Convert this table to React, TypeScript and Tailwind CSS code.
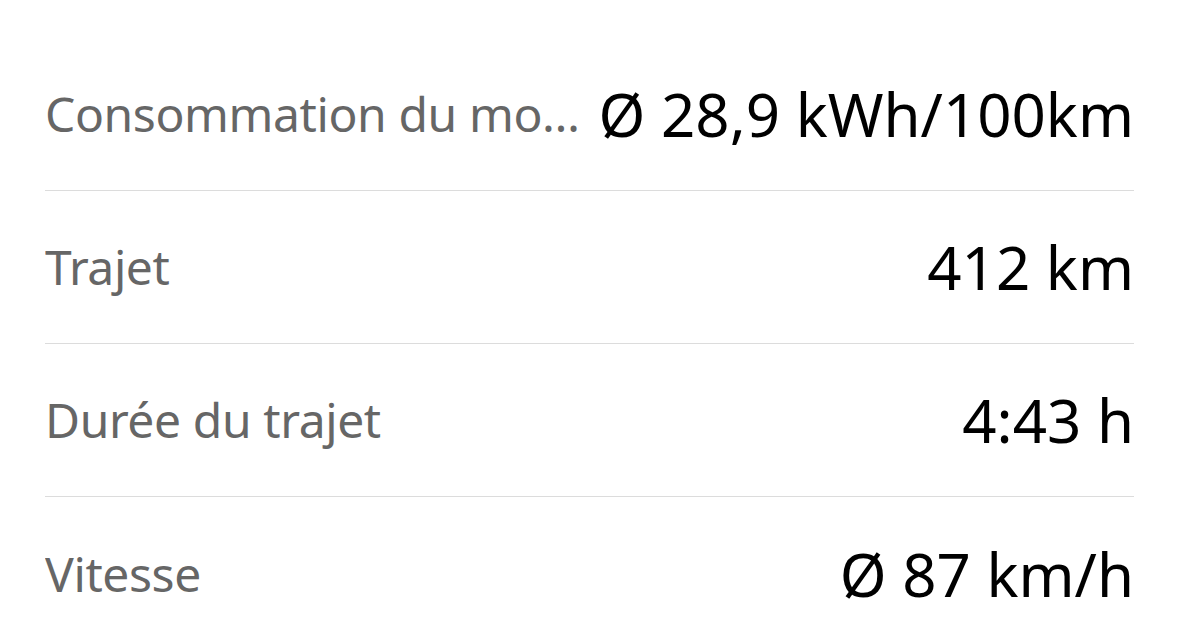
import React from 'react';

const rows = [
  { label: 'Consommation du moteur électrique', value: 'Ø 28,9 kWh/100km' },
  { label: 'Trajet', value: '412 km' },
  { label: 'Durée du trajet', value: '4:43 h' },
  { label: 'Vitesse', value: 'Ø 87 km/h' },
];

const App: React.FC = () => {
  return (
    <div className="min-h-screen bg-white pt-[38px] px-[45px] font-['Noto_Sans',sans-serif]">
      {rows.map((row, i) => (
        <div
          key={row.label}
          className={`flex items-center gap-[16px] h-[153px] ${i < rows.length - 1 ? 'border-b border-[#dcdcdc]' : ''}`}
        >
          <span className="flex-1 min-w-0 truncate text-[48px] leading-[64px] tracking-[-0.4px] text-[#666666]">{row.label}</span>
          <span className="shrink-0 text-[60px] leading-[72px] text-black">{row.value}</span>
        </div>
      ))}
    </div>
  );
};

export default App;
